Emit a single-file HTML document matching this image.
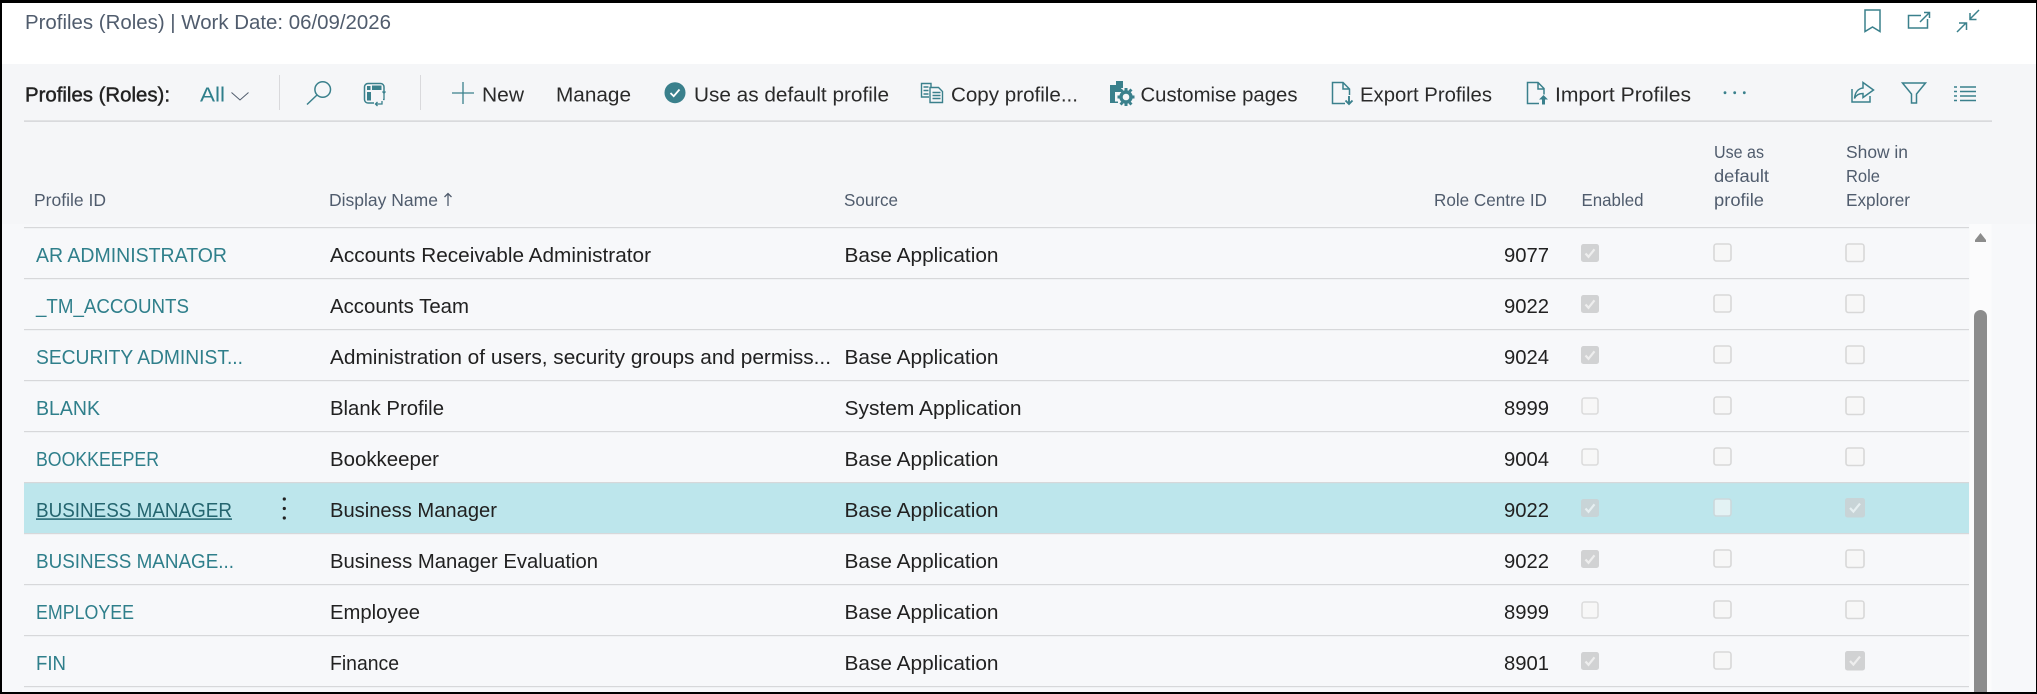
<!DOCTYPE html>
<html><head><meta charset="utf-8"><style>
html,body{margin:0;padding:0;background:#000;width:2037px;height:694px;overflow:hidden}
svg{display:block}
text{font-family:"Liberation Sans",sans-serif;white-space:pre}
.t{font-size:20.5px;fill:#212121}
.l{font-size:20.5px;fill:#2f7f8b}
.h{font-size:17.5px;fill:#505c6d}
.b{font-size:20.5px;fill:#2a2a2a}
.i{fill:none;stroke:#3a808c;stroke-width:1.5}
.f{fill:#3a808c}
.sep{stroke:#d9d9dc;stroke-width:1}
</style></head><body>
<svg width="2037" height="694" viewBox="0 0 2037 694" xmlns="http://www.w3.org/2000/svg">
<defs>
<g id="ce"><rect x="0" y="0" width="18" height="18" rx="2.5" fill="#d1d2d3"/><path d="M4.5 9.5l3 3.3 6-7.5" fill="none" stroke="#eeeeee" stroke-width="2.2"/></g>
<g id="cs"><rect x="0" y="0" width="20" height="19.5" rx="2.5" fill="#d1d2d3"/><path d="M5 10l3.4 3.6 6.6-8" fill="none" stroke="#eeeeee" stroke-width="2.2"/></g>
<g id="ue"><rect x="1" y="1" width="16" height="16" rx="2.5" fill="#f7f7f7" stroke="#dcdcdc" stroke-width="1.6"/></g>
<g id="ud"><rect x="1" y="1" width="17" height="17" rx="2.5" fill="#f7f7f7" stroke="#d8d8d8" stroke-width="1.6"/></g>
<g id="us"><rect x="1" y="1" width="18" height="17.5" rx="2.5" fill="#f7f7f7" stroke="#d8d8d8" stroke-width="1.6"/></g>
</defs>
<rect width="2037" height="694" fill="#000"/>
<rect x="2" y="3" width="2034" height="689" fill="#f7f8fa"/>
<rect x="2" y="3" width="2034" height="61" fill="#fff"/>
<rect x="2" y="64" width="2034" height="160" fill="#f5f6f8"/>

<text x="25" y="29" class="h" style="font-size:20.5px" textLength="366" lengthAdjust="spacingAndGlyphs">Profiles (Roles) | Work Date: 06/09/2026</text>

<!-- top right icons -->
<path class="i" d="M1865 10h15v21.500l-7.500-4.500-7.500 4.500z"/>
<path class="i" d="M1921 15.500h-12.500v12.500h19v-9"/>
<path class="i" d="M1920 22l9-9M1924 12.500h5.500v5.500"/>
<path class="i" d="M1979 10l-9 9M1970 13v6.500h6.500"/>
<path class="i" d="M1957 32l9-9M1959 23h7.500v7"/>

<!-- toolbar -->
<text x="25" y="101.500" class="b" style="fill:#222;stroke:#222;stroke-width:.45" textLength="145" lengthAdjust="spacingAndGlyphs">Profiles (Roles):</text>
<text x="200" y="101.500" class="l" textLength="25" lengthAdjust="spacingAndGlyphs">All</text>
<path d="M231.500 92.500l8.500 7.500 8.500-7.500" fill="none" stroke="#505c6d" stroke-width="1"/>
<path class="sep" d="M279.500 75v35M420.500 75v35"/>
<circle class="i" cx="322.700" cy="89.500" r="7.800"/>
<path class="i" d="M317 95l-10 9.500"/>
<rect class="i" x="364.500" y="83.500" width="19.500" height="19.500" rx="3.500"/>
<rect x="374" y="93" width="12" height="12" fill="#f5f6f8"/>
<rect class="f" x="372" y="85.500" width="9.500" height="4.500"/>
<rect class="f" x="367" y="86" width="3.500" height="4"/>
<rect class="f" x="367" y="92" width="4" height="8.500"/>
<path class="i" style="stroke-width:1.300" d="M384 93v6.500h-1M376 104h6v-3M382.500 91.500l1.500 1.800 1.500-1.800M377.500 102l-2 2 2 2"/>
<path class="i" style="stroke-width:1.300" d="M452 93h22M463 82v22"/>
<text x="482" y="101.500" class="b" textLength="42" lengthAdjust="spacingAndGlyphs">New</text>
<text x="556" y="101.500" class="b" textLength="75" lengthAdjust="spacingAndGlyphs">Manage</text>
<circle class="f" cx="675" cy="92.700" r="10.500"/>
<path d="M670.500 93l3.200 3.200 5.800-6.700" fill="none" stroke="#fff" stroke-width="1.800"/>
<text x="694" y="101.500" class="b" textLength="195" lengthAdjust="spacingAndGlyphs">Use as default profile</text>

<path class="i" style="stroke-width:1.400" d="M929 97h-7.500v-13.500h9.500v3.500"/>
<path class="i" style="stroke-width:1.400" d="M930 87.500h8.500l4 4v11h-12.500zM923.500 87h5M923.500 90.500h5M923.500 94h5M932.500 92.500h8M932.500 95.500h8M932.500 98.500h8"/>
<text x="951" y="101.500" class="b" textLength="127" lengthAdjust="spacingAndGlyphs">Copy profile...</text>

<path class="f" d="M1110 85h6v-4h7v7h-2v4h-6v9.500h3v1.500h-8z"/>
<rect class="f" x="1116" y="85" width="7" height="3"/>
<circle cx="1126" cy="97" r="5" fill="none" stroke="#3a808c" stroke-width="3.400"/>
<path class="f" d="M1124.500 88h3v2.500h-3zM1124.500 103.500h3v2.500h-3zM1117.500 95.500h2.500v3h-2.500zM1132 95.500h2.500v3h-2.500zM1119.500 90.500l2-2 2 2-2 2zM1128.500 90.500l2-2 2 2-2 2zM1119.500 103.500l2-2 2 2-2 2zM1128.500 103.500l2-2 2 2-2 2z"/>
<text x="1140.500" y="101.500" class="b" textLength="157" lengthAdjust="spacingAndGlyphs">Customise pages</text>

<path class="i" d="M1345 103.500h-12.500v-21h10.500l6.500 6.500v6M1343 82.500v6.500h6.500"/>
<path class="i" style="stroke-width:1.900" d="M1349 96v7.500M1345.500 100.500l3.500 3.500 3.500-3.500"/>
<text x="1360" y="101.500" class="b" textLength="132" lengthAdjust="spacingAndGlyphs">Export Profiles</text>

<path class="i" d="M1539 103.500h-11.500v-21h10.500l6 6v6M1538 82.500v6.500h6"/>
<path class="f" d="M1543.500 95l4.500 4.500h-3v5h-3v-5h-3z"/>
<text x="1555" y="101.500" class="b" textLength="136" lengthAdjust="spacingAndGlyphs">Import Profiles</text>
<circle class="f" cx="1725" cy="92.700" r="1.400"/><circle class="f" cx="1734.700" cy="92.700" r="1.400"/><circle class="f" cx="1744.300" cy="92.700" r="1.400"/>

<path class="i" d="M1852 89v13h18v-6"/>
<path class="i" d="M1863 82.500l10.500 7.500-10.500 7.500v-4c-4.500 0-7 1.500-8.500 5 .5-6 3.500-10 8.500-10.500z"/>
<path class="i" d="M1902.500 83h23l-9 11v9h-5v-9z"/>
<path class="i" style="stroke-width:1.500" d="M1960 87h16M1960 91.500h16M1960 96h16M1960 100.500h16M1954 87h3M1954 91.500h3M1954 96h3M1954 100.500h3"/>

<rect x="24" y="120.500" width="1968" height="1.200" fill="#cdced1"/>

<!-- headers -->
<text x="34" y="206" class="h" textLength="72" lengthAdjust="spacingAndGlyphs">Profile ID</text>
<text x="329" y="206" class="h" textLength="109" lengthAdjust="spacingAndGlyphs">Display Name</text>
<path d="M448 206v-12M444.500 197l3.500-3.500 3.500 3.500" fill="none" stroke="#505c6d" stroke-width="1.300"/>
<text x="844" y="206" class="h" textLength="54" lengthAdjust="spacingAndGlyphs">Source</text>
<text x="1434" y="206" class="h" textLength="113" lengthAdjust="spacingAndGlyphs">Role Centre ID</text>
<text x="1581.500" y="206" class="h" textLength="62" lengthAdjust="spacingAndGlyphs">Enabled</text>
<text x="1714" y="158" class="h" textLength="50" lengthAdjust="spacingAndGlyphs">Use as</text>
<text x="1714" y="182" class="h" textLength="55" lengthAdjust="spacingAndGlyphs">default</text>
<text x="1714" y="206" class="h" textLength="50" lengthAdjust="spacingAndGlyphs">profile</text>
<text x="1846" y="158" class="h" textLength="62" lengthAdjust="spacingAndGlyphs">Show in</text>
<text x="1846" y="182" class="h" textLength="34" lengthAdjust="spacingAndGlyphs">Role</text>
<text x="1846" y="206" class="h" textLength="64" lengthAdjust="spacingAndGlyphs">Explorer</text>

<!-- highlight -->
<rect x="24" y="482" width="1945" height="51" fill="#bde6ec"/>

<!-- grid lines -->
<g fill="#d7d8da">
<rect x="24" y="227" width="1945" height="1.200"/>
<rect x="24" y="278" width="1945" height="1.200"/>
<rect x="24" y="329" width="1945" height="1.200"/>
<rect x="24" y="380" width="1945" height="1.200"/>
<rect x="24" y="431" width="1945" height="1.200"/>
<rect x="24" y="482" width="1945" height="1.200"/>
<rect x="24" y="533" width="1945" height="1.200"/>
<rect x="24" y="584" width="1945" height="1.200"/>
<rect x="24" y="635" width="1945" height="1.200"/>
<rect x="24" y="686" width="1945" height="1.200"/>
</g>

<!-- row text -->
<text x="36" y="262" class="l" textLength="191" lengthAdjust="spacingAndGlyphs">AR ADMINISTRATOR</text>
<text x="36" y="313" class="l" textLength="153" lengthAdjust="spacingAndGlyphs">_TM_ACCOUNTS</text>
<text x="36" y="364" class="l" textLength="207" lengthAdjust="spacingAndGlyphs">SECURITY ADMINIST...</text>
<text x="36" y="415" class="l" textLength="64" lengthAdjust="spacingAndGlyphs">BLANK</text>
<text x="36" y="466" class="l" textLength="123" lengthAdjust="spacingAndGlyphs">BOOKKEEPER</text>
<text x="36" y="517" class="l" style="fill:#24656f" textLength="196" lengthAdjust="spacingAndGlyphs">BUSINESS MANAGER</text>
<rect x="36" y="518.300" width="196" height="1.600" fill="#2a6d78"/>
<circle cx="284.300" cy="499" r="1.600" fill="#222"/><circle cx="284.300" cy="508.500" r="1.600" fill="#222"/><circle cx="284.300" cy="518" r="1.600" fill="#222"/>
<text x="36" y="568" class="l" textLength="198" lengthAdjust="spacingAndGlyphs">BUSINESS MANAGE...</text>
<text x="36" y="619" class="l" textLength="98" lengthAdjust="spacingAndGlyphs">EMPLOYEE</text>
<text x="36" y="670" class="l" textLength="30" lengthAdjust="spacingAndGlyphs">FIN</text>

<text x="330" y="262" class="t" textLength="321" lengthAdjust="spacingAndGlyphs">Accounts Receivable Administrator</text>
<text x="330" y="313" class="t" textLength="139" lengthAdjust="spacingAndGlyphs">Accounts Team</text>
<text x="330" y="364" class="t" textLength="501" lengthAdjust="spacingAndGlyphs">Administration of users, security groups and permiss...</text>
<text x="330" y="415" class="t" textLength="114" lengthAdjust="spacingAndGlyphs">Blank Profile</text>
<text x="330" y="466" class="t" textLength="109" lengthAdjust="spacingAndGlyphs">Bookkeeper</text>
<text x="330" y="517" class="t" textLength="167" lengthAdjust="spacingAndGlyphs">Business Manager</text>
<text x="330" y="568" class="t" textLength="268" lengthAdjust="spacingAndGlyphs">Business Manager Evaluation</text>
<text x="330" y="619" class="t" textLength="90" lengthAdjust="spacingAndGlyphs">Employee</text>
<text x="330" y="670" class="t" textLength="69" lengthAdjust="spacingAndGlyphs">Finance</text>

<text x="844.500" y="262" class="t" textLength="154" lengthAdjust="spacingAndGlyphs">Base Application</text>
<text x="844.500" y="364" class="t" textLength="154" lengthAdjust="spacingAndGlyphs">Base Application</text>
<text x="844.500" y="415" class="t" textLength="177" lengthAdjust="spacingAndGlyphs">System Application</text>
<text x="844.500" y="466" class="t" textLength="154" lengthAdjust="spacingAndGlyphs">Base Application</text>
<text x="844.500" y="517" class="t" textLength="154" lengthAdjust="spacingAndGlyphs">Base Application</text>
<text x="844.500" y="568" class="t" textLength="154" lengthAdjust="spacingAndGlyphs">Base Application</text>
<text x="844.500" y="619" class="t" textLength="154" lengthAdjust="spacingAndGlyphs">Base Application</text>
<text x="844.500" y="670" class="t" textLength="154" lengthAdjust="spacingAndGlyphs">Base Application</text>

<g class="t">
<text x="1504" y="262" class="t" textLength="45" lengthAdjust="spacingAndGlyphs">9077</text>
<text x="1504" y="313" class="t" textLength="45" lengthAdjust="spacingAndGlyphs">9022</text>
<text x="1504" y="364" class="t" textLength="45" lengthAdjust="spacingAndGlyphs">9024</text>
<text x="1504" y="415" class="t" textLength="45" lengthAdjust="spacingAndGlyphs">8999</text>
<text x="1504" y="466" class="t" textLength="45" lengthAdjust="spacingAndGlyphs">9004</text>
<text x="1504" y="517" class="t" textLength="45" lengthAdjust="spacingAndGlyphs">9022</text>
<text x="1504" y="568" class="t" textLength="45" lengthAdjust="spacingAndGlyphs">9022</text>
<text x="1504" y="619" class="t" textLength="45" lengthAdjust="spacingAndGlyphs">8999</text>
<text x="1504" y="670" class="t" textLength="45" lengthAdjust="spacingAndGlyphs">8901</text>
</g>

<!-- checkboxes: enabled -->
<use href="#ce" x="1581" y="244"/>
<use href="#ce" x="1581" y="295"/>
<use href="#ce" x="1581" y="346"/>
<use href="#ue" x="1581" y="397"/>
<use href="#ue" x="1581" y="448"/>
<rect x="1581" y="499" width="18" height="18" rx="2.500" fill="#c8d4d7"/><path d="M1585.500 508.500l3 3.300 6-7.500" fill="none" stroke="#e6eff1" stroke-width="2.200"/>
<use href="#ce" x="1581" y="550"/>
<use href="#ue" x="1581" y="601"/>
<use href="#ce" x="1581" y="652"/>
<!-- default -->
<use href="#ud" x="1713" y="243"/>
<use href="#ud" x="1713" y="294"/>
<use href="#ud" x="1713" y="345"/>
<use href="#ud" x="1713" y="396"/>
<use href="#ud" x="1713" y="447"/>
<rect x="1714" y="499" width="17" height="17" rx="2.500" fill="#e3f2f4" stroke="#ccd8db" stroke-width="1.600"/>
<use href="#ud" x="1713" y="549"/>
<use href="#ud" x="1713" y="600"/>
<use href="#ud" x="1713" y="651"/>
<!-- show -->
<use href="#us" x="1845" y="243"/>
<use href="#us" x="1845" y="294"/>
<use href="#us" x="1845" y="345"/>
<use href="#us" x="1845" y="396"/>
<use href="#us" x="1845" y="447"/>
<rect x="1845" y="498" width="20" height="19.500" rx="2.500" fill="#c8d4d7"/><path d="M1850 508l3.400 3.600 6.600-8" fill="none" stroke="#e6eff1" stroke-width="2.200"/>
<use href="#us" x="1845" y="549"/>
<use href="#us" x="1845" y="600"/>
<use href="#cs" x="1845" y="651"/>

<!-- scrollbar -->
<rect x="1969.500" y="224" width="22" height="468" fill="#fbfbfc"/>
<path d="M1980.500 233l5.500 7v2h-11v-2z" fill="#8c8c8c"/>
<path d="M1974 692v-375.500a6.500 6.500 0 0 1 13 0v375.500z" fill="#8c8c8c"/>
</svg>
</body></html>
